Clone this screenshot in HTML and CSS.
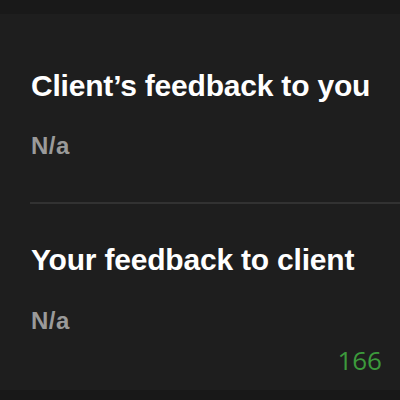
FILE: index.html
```html
<!DOCTYPE html>
<html>
<head>
<meta charset="utf-8">
<link rel="stylesheet" href="styles.css">
</head>
<body>
<div class="topbar"></div>
<main class="content">
  <section class="block first">
    <h2 class="title">Client’s feedback to you</h2>
    <p class="value">N/a</p>
  </section>
  <div class="divider"></div>
  <section class="block second">
    <h2 class="title">Your feedback to client</h2>
    <p class="value">N/a</p>
    <div class="count">166</div>
  </section>
</main>
<div class="bottombar"></div>
</body>
</html>
```

FILE: styles.css
```css
html, body {
  margin: 0;
  padding: 0;
  background: #1e1e1e;
  width: 400px;
  height: 400px;
  overflow: hidden;
  font-family: "Liberation Sans", Arial, sans-serif;
}
body {
  display: flex;
  flex-direction: column;
}
.topbar {
  height: 14px;
  background: #191919;
}
.content {
  flex: 1;
  display: flex;
  flex-direction: column;
}
.block {
  padding-left: 31px;
  padding-right: 18px;
}
.first {
  padding-top: 54px;
  padding-bottom: 42px;
}
.second {
  padding-top: 38px;
}
.title {
  margin: 0;
  color: #ffffff;
  font-size: 30px;
  font-weight: 700;
  line-height: 36px;
  letter-spacing: -0.2px;
}
.value {
  margin: 28px 0 0;
  color: #9a9a9a;
  font-size: 24px;
  font-weight: 700;
  line-height: 28px;
  letter-spacing: 0.5px;
}
.second .value {
  margin-top: 29px;
}
.divider {
  margin-left: 30px;
  height: 2px;
  background: #323232;
}
.count {
  text-align: right;
  color: #3c9a3c;
  font-family: "Open Sans", sans-serif;
  font-size: 26px;
  line-height: 30px;
  margin-top: 10px;
}
.bottombar {
  height: 10px;
  background: #181818;
}
```
